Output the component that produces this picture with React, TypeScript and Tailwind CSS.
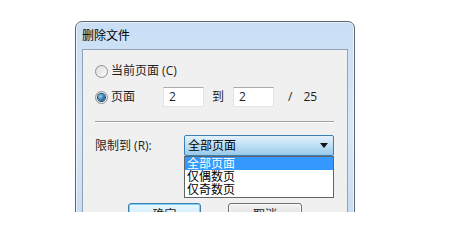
import React from "react";

const font = { fontFamily: '"Open Sans", "Noto Sans CJK SC", sans-serif' };

function Radio({ checked }: { checked?: boolean }) {
  return (
    <span className="flex h-[13px] w-[13px] items-center justify-center rounded-full border border-[#8e8f8f] bg-gradient-to-br from-[#dcdcdc] to-[#fbfbfb]">
      {checked && (
        <span className="h-[7px] w-[7px] rounded-full bg-[radial-gradient(circle_at_35%_35%,#8fd0f3,#1c5e93_70%)] ring-1 ring-[#1a4a70]" />
      )}
    </span>
  );
}

function Input({ value }: { value: string }) {
  return (
    <div className="flex h-[20px] w-[41px] items-center border border-[#e2e3ea] border-t-[#abadb3] bg-white pl-[5px] text-[12px] leading-none">
      {value}
    </div>
  );
}

export default function App() {
  return (
    <div className="h-[212px] overflow-hidden bg-white pl-[75px] pt-[21px] text-[#1e1e1e]" style={font}>
      <div className="relative w-[280px] rounded-t-[7px] border border-[#5d6670] bg-gradient-to-b from-[#c9def5] via-[#d9e8f8] to-[#c4daf2] px-[6px] shadow-[0_0_0_1px_rgba(255,255,255,0.6)_inset]">
        {/* title bar */}
        <div className="flex h-[27px] items-center pl-[0px] pt-[1px] text-[12px] text-black">删除文件</div>

        {/* client area */}
        <div className="border border-[#8fa2b8] bg-[#f0f0f0] pb-[10px] pl-[12px] pr-[13px] pt-[13px] text-[12px]">
          <div className="flex h-[16px] items-center gap-[3px]">
            <Radio />
            <span>当前页面 (C)</span>
          </div>

          <div className="mt-[8px] flex h-[20px] items-center">
            <div className="flex w-[68px] items-center gap-[3px]">
              <Radio checked />
              <span>页面</span>
            </div>
            <Input value="2" />
            <span className="ml-[8px] w-[21px]">到</span>
            <Input value="2" />
            <span className="ml-[14px]">/</span>
            <span className="ml-[11px]">25</span>
          </div>

          <div className="mt-[14px] h-px bg-[#a0a0a0] shadow-[0_1px_0_#ffffff]" />

          <div className="mt-[13px] flex h-[21px] items-center">
            <span className="w-[92px]">限制到 (R):</span>
            <div className="relative">
              <div className="flex h-[21px] w-[150px] items-center justify-between rounded-[2px] border border-[#3c7fb1] bg-gradient-to-b from-[#e4f1fb] via-[#bfdff5] to-[#98c9ea] pl-[3px] pr-[5px] text-black">
                <span>全部页面</span>
                <svg width="8" height="5" viewBox="0 0 8 5">
                  <path d="M0 0h8L4 5z" fill="#111" />
                </svg>
              </div>
              <div className="absolute left-0 top-[21px] z-10 w-[150px] border border-[#646464] bg-white pb-px text-[12px] leading-[13px]">
                <div className="bg-[#3399ff] pl-[2px] text-white">全部页面</div>
                <div className="pl-[2px] text-black">仅偶数页</div>
                <div className="pl-[2px] text-black">仅奇数页</div>
              </div>
            </div>
          </div>

          <div className="mt-[47px] flex justify-center gap-[27px] pl-px">
            <button className="h-[23px] w-[73px] rounded-[3px] border border-[#3c7fb1] bg-gradient-to-b from-[#eaf6fd] to-[#bee6fd] text-[12px] shadow-[inset_0_0_0_1px_#7fd0f5]">
              确定
            </button>
            <button className="h-[23px] w-[74px] rounded-[3px] border border-[#707070] bg-gradient-to-b from-[#f2f2f2] to-[#d5d5d5] text-[12px] shadow-[inset_0_0_0_1px_#fcfcfc]">
              取消
            </button>
          </div>
        </div>
      </div>
    </div>
  );
}
